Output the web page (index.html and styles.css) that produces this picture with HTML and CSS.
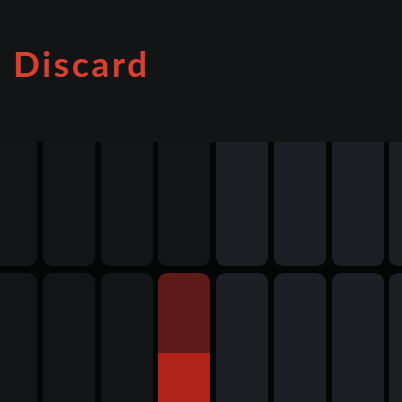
FILE: index.html
```html
<!DOCTYPE html>
<html lang="en">
<head>
  <meta charset="UTF-8">
  <meta name="viewport" content="width=device-width, initial-scale=1.0">
  <link rel="stylesheet" href="styles.css">
  <title>Discard</title>
</head>
<body>
  <div class="header">
    <h1 class="title">Discard</h1>
  </div>
  <div class="board">
    <div class="pads">
      <!-- fila de arriba -->
      <div class="pad"></div>
      <div class="pad"></div>
      <div class="pad"></div>
      <div class="pad"></div>
      <div class="pad pad-cool"></div>
      <div class="pad pad-cool"></div>
      <div class="pad pad-cool"></div>
      <div class="pad pad-cool"></div>
      <!-- fila de abajo -->
      <div class="pad"></div>
      <div class="pad"></div>
      <div class="pad"></div>
      <div class="pad pad-hot">
        <div class="pad-fill"></div>
      </div>
      <div class="pad pad-cool"></div>
      <div class="pad pad-cool"></div>
      <div class="pad pad-cool"></div>
      <div class="pad pad-cool"></div>
    </div>
  </div>
</body>
</html>
```

FILE: styles.css
```css
  body {
    margin: 0;
    width: 402px;
    height: 402px;
    overflow: hidden;
    background-color: rgb(19, 20, 22);
    font-family: Lato, "Open Sans", sans-serif;
  }

  .header {
    height: 142px;
    padding: 0 0 0 13px;
    box-sizing: border-box;
    background-color: rgb(19, 20, 22);
  }

  .title {
    margin: 0;
    padding-top: 42px;
    font-size: 35px;
    font-weight: 700;
    letter-spacing: 2.7px;
    color: rgb(218, 64, 48);
  }

  /*la rejilla de botones*/
  .board {
    height: 260px;
    overflow: hidden;
    background-color: rgb(5, 6, 6);
  }

  .pads {
    display: grid;
    grid-template-columns: repeat(8, 52px);
    grid-template-rows: 134px 140px;
    column-gap: 5.75px;
    row-gap: 7px;
    margin-top: -10px;
    margin-left: -15px;
  }

  .pad {
    border-radius: 9px;
    background-color: rgb(20, 21, 23);
    overflow: hidden;
  }

  .pad-cool {
    background-color: rgb(28, 31, 36);
  }

  .pad-hot {
    display: flex;
    flex-direction: column;
    justify-content: flex-end;
    background-color: rgb(92, 26, 25);
  }

  .pad-fill {
    height: 60px;
    background-color: rgb(178, 36, 26);
  }
```
